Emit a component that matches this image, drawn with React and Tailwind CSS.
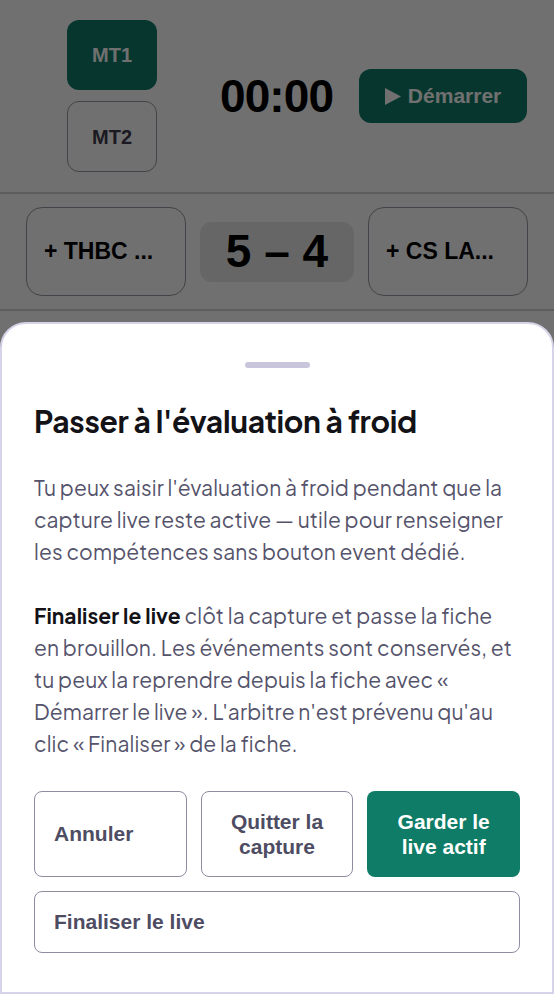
import React from 'react';

const sans = { fontFamily: '"Liberation Sans", Arial, sans-serif' };
const body = { fontFamily: '"Plus Jakarta Sans", Inter, "Noto Sans", sans-serif' };

const MatchHeader = () => (
  <div className="bg-white" style={sans}>
    <div className="flex items-center h-[194px] border-b-2 border-[#d4d4d8]">
      <div className="flex flex-col gap-[11px] ml-[67px] w-[90px]">
        <button className="h-[70px] rounded-xl bg-[#0e7c66] text-white font-bold text-xl">MT1</button>
        <button className="h-[71px] rounded-xl border border-[#9a9aa6] text-[#3f3d4e] font-bold text-xl">MT2</button>
      </div>
      <div className="ml-[63px] text-[46px] font-bold text-black tracking-[-0.02em]">00:00</div>
      <button className="ml-[26px] flex items-center justify-center gap-[7px] w-[168px] h-[54px] rounded-xl bg-[#0e7c66] text-white font-bold text-[21px]">
        <svg width="16" height="17" viewBox="0 0 16 17"><path d="M0 0 L16 8.5 L0 17 Z" fill="currentColor" /></svg>
        Démarrer
      </button>
    </div>
    <div className="flex items-center gap-[14px] px-[26px] h-[117px] border-b-2 border-[#d4d4d8]">
      <button className="w-[160px] h-[89px] rounded-2xl border border-[#9a9aa6] text-left pl-[17px] font-bold text-[23px] text-black">+ THBC ...</button>
      <div className="w-[154px] h-[60px] rounded-xl bg-[#e8e8ea] flex items-center justify-center text-[46px] font-bold text-black">5 – 4</div>
      <button className="w-[160px] h-[89px] rounded-2xl border border-[#9a9aa6] text-left pl-[17px] font-bold text-[23px] text-black">+ CS LA...</button>
    </div>
    <div className="h-[700px] bg-white" />
  </div>
);

const Sheet = () => (
  <div className="absolute left-0 right-0 bottom-0 top-[322px] bg-white rounded-t-[26px] border-2 border-[#d6d3e8] px-[32px]">
    <div className="flex justify-center pt-[38px]">
      <div className="w-[65px] h-[6px] rounded-full bg-[#c8c5dc]" />
    </div>
    <h2 className="mt-[35px] text-[30px] leading-[36px] font-bold text-[#131217] tracking-[-0.01em]" style={body}>
      Passer à l'évaluation à froid
    </h2>
    <p className="mt-[33px] text-[21px] leading-[32px] text-[#55536b] tracking-[0.005em]" style={body}>
      Tu peux saisir l'évaluation à froid pendant que la capture live reste active — utile pour renseigner les compétences sans bouton event dédié.
    </p>
    <p className="mt-[32px] text-[21px] leading-[32px] text-[#55536b] tracking-[0.005em]" style={body}>
      <strong className="text-[#131217] font-bold">Finaliser le live</strong>{' '}
      clôt la capture et passe la fiche en brouillon. Les événements sont conservés, et tu peux la reprendre depuis la fiche avec « Démarrer le live ». L'arbitre n'est prévenu qu'au clic « Finaliser » de la fiche.
    </p>
    <div className="mt-[31px] flex flex-col gap-[14px]" style={sans}>
      <div className="grid grid-cols-3 gap-[14px]">
        <button className="h-[86px] rounded-lg border border-[#8e8ca0] bg-white text-left pl-[19px] font-bold text-[21px] text-[#4e4c63]">Annuler</button>
        <button className="h-[86px] rounded-lg border border-[#8e8ca0] bg-white text-center px-3 font-bold text-[21px] leading-[25px] text-[#4e4c63]">Quitter la capture</button>
        <button className="h-[86px] rounded-lg bg-[#0e7c66] text-center px-6 font-bold text-[21px] leading-[25px] text-white">Garder le live actif</button>
      </div>
      <button className="h-[62px] rounded-lg border border-[#8e8ca0] bg-white text-left pl-[19px] font-bold text-[21px] text-[#4e4c63]">Finaliser le live</button>
    </div>
  </div>
);

export default function App() {
  return (
    <div className="relative h-[994px] w-full overflow-hidden">
      <MatchHeader />
      <div className="absolute inset-0 bg-black/[0.56]" />
      <Sheet />
    </div>
  );
}
